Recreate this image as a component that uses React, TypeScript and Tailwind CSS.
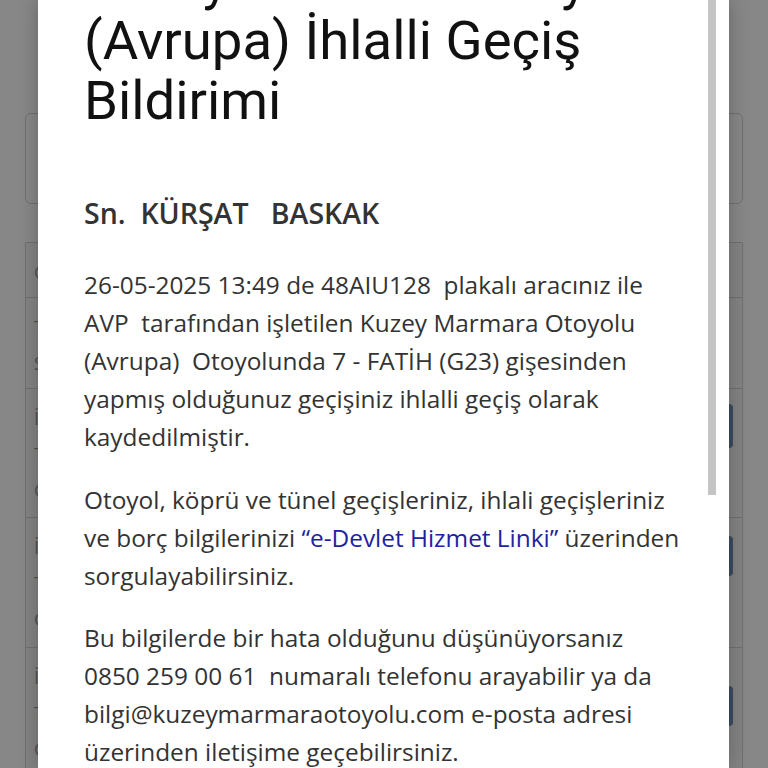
const rows = [
  { h: 'h-[55px]', lines: ['Geçiş'], button: null },
  { h: 'h-[91px]', lines: ['Tarih', 'Saat'], button: null },
  { h: 'h-[129px]', lines: ['İhlal', 'Tutar', 'Gişe'], button: 'mt-[15px] h-[44px]' },
  { h: 'h-[130px]', lines: ['İhlal', 'Tutar', 'Gişe'], button: 'mt-[18px] h-[40px]' },
  { h: 'h-[130px]', lines: ['İhlal', 'Tutar', 'Gişe'], button: 'mt-[38px] h-[40px]' },
];

function BackgroundPage() {
  return (
    <div className="px-[25px] font-['Open_Sans',sans-serif]">
      <div className="mt-[113px] h-[91px] rounded-md border border-[#d4d4d4] bg-white" />
      <div className="mt-[38px] border-x border-t border-[#d4d4d4] bg-[#f8f8f8]">
        {rows.map((row, i) => (
          <div key={i} className={`${row.h} flex justify-between border-b border-[#d4d4d4]`}>
            <div className="flex flex-col gap-[14px] pl-[8px] pt-[18px] text-[18px] leading-[22px] text-[#9a9a9a]">
              {row.lines.map(l => (
                <span key={l}>{l}</span>
              ))}
            </div>
            {row.button && (
              <div className="pr-[9px]">
                <div className={`${row.button} w-[120px] rounded bg-[#7290b8]`} />
              </div>
            )}
          </div>
        ))}
      </div>
    </div>
  );
}

export default function App() {
  return (
    <div className="relative h-[768px] w-full overflow-hidden bg-white">
      <BackgroundPage />
      <div className="absolute inset-0 bg-black/[0.47]" />

      <div className="absolute top-0 bottom-0 left-[38px] right-[39px] overflow-hidden bg-white shadow-[0_0_18px_rgba(0,0,0,0.25)]">
        <div className="-mt-[50px] px-[46px]">
          <h1 className="font-['Roboto',sans-serif] text-[54.5px] leading-[60px] font-normal text-[#111]">
            Kuzey Marmara Otoyolu (Avrupa) İhlalli Geçiş Bildirimi
          </h1>

          <p className="mt-[65px] whitespace-pre font-['Open_Sans',sans-serif] text-[28.5px] leading-[36px] font-semibold text-[#333]">
            {'Sn.  KÜRŞAT   BASKAK'}
          </p>

          <div className="font-['Open_Sans',sans-serif] text-[24.4px] leading-[38px] text-[#333]">
            <p className="mt-[35px]">
              26-05-2025 13:49 de 48AIU128{'\u00a0 '}plakalı aracınız ile AVP{'\u00a0 '}tarafından işletilen Kuzey
              Marmara Otoyolu (Avrupa){'\u00a0 '}Otoyolunda 7 - FATİH (G23) gişesinden yapmış olduğunuz geçişiniz
              ihlalli geçiş olarak kaydedilmiştir.
            </p>
            <p className="mt-[25px]">
              Otoyol, köprü ve tünel geçişleriniz, ihlali geçişleriniz ve borç bilgilerinizi{' '}
              <a href="#" className="text-[#1f22a0]">
                “e-Devlet Hizmet Linki”
              </a>{' '}
              üzerinden sorgulayabilirsiniz.
            </p>
            <p className="mt-[24px]">
              Bu bilgilerde bir hata olduğunu düşünüyorsanız 0850 259 00 61{'\u00a0 '}numaralı telefonu arayabilir
              ya da bilgi@kuzeymarmaraotoyolu.com e-posta adresi üzerinden iletişime geçebilirsiniz.
            </p>
          </div>
        </div>

        {/* scroll thumb */}
        <div className="absolute top-0 right-[13px] h-[495px] w-[8px] bg-[#c4c4c4]" />
      </div>
    </div>
  );
}
